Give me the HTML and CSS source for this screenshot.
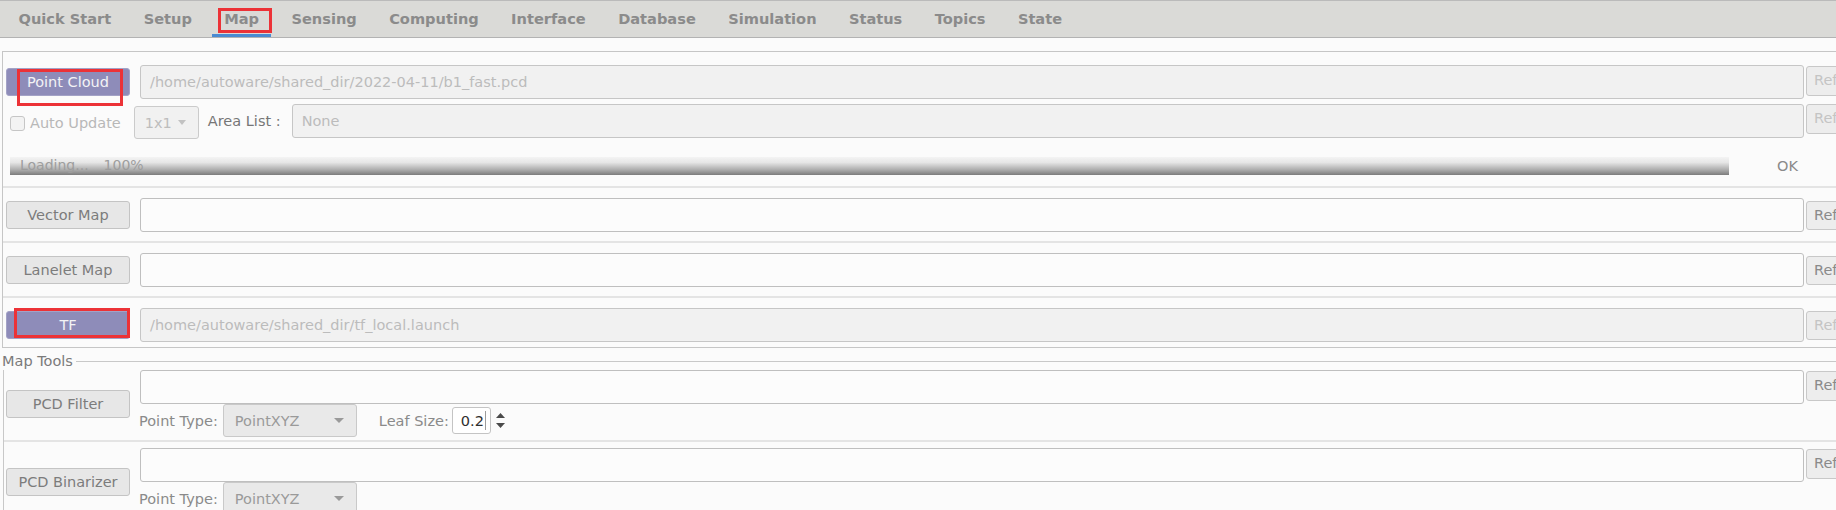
FILE: index.html
```html
<!DOCTYPE html>
<html>
<head>
<meta charset="utf-8">
<link rel="stylesheet" href="styles.css">
</head>
<body>
<div class="tabbar">
  <div class="tab">Quick Start</div>
  <div class="tab">Setup</div>
  <div class="tab active">Map</div>
  <div class="tab">Sensing</div>
  <div class="tab">Computing</div>
  <div class="tab">Interface</div>
  <div class="tab">Database</div>
  <div class="tab">Simulation</div>
  <div class="tab">Status</div>
  <div class="tab">Topics</div>
  <div class="tab">State</div>
</div>

<div class="frame">
  <section class="pc">
    <div class="row">
      <div class="main">
        <div class="btn on">Point Cloud</div>
        <div class="field dis grow">/home/autoware/shared_dir/2022-04-11/b1_fast.pcd</div>
      </div>
      <div class="ref dis">Ref</div>
    </div>
    <div class="row row2">
      <div class="main">
        <span class="check"></span>
        <span class="lbl dim autoup">Auto Update</span>
        <div class="combo small dis"><span>1x1</span><svg class="arr" width="8" height="5" viewBox="0 0 8 5"><path d="M0 0H8L4 5Z"/></svg></div>
        <span class="lbl area">Area List :</span>
        <div class="field dis grow area-field">None</div>
      </div>
      <div class="ref dis">Ref</div>
    </div>
    <div class="progress-row">
      <div class="progress"><span>Loading...</span><span class="pct">100%</span></div>
      <span class="ok">OK</span>
    </div>
  </section>

  <section class="simple">
    <div class="btn">Vector Map</div>
    <div class="field"></div>
    <div class="ref">Ref</div>
  </section>

  <section class="simple">
    <div class="btn">Lanelet Map</div>
    <div class="field"></div>
    <div class="ref">Ref</div>
  </section>

  <section class="simple last">
    <div class="btn on">TF</div>
    <div class="field dis">/home/autoware/shared_dir/tf_local.launch</div>
    <div class="ref dis">Ref</div>
  </section>
</div>

<div class="group">
  <div class="group-head"><span>Map Tools</span><i class="rule"></i></div>
  <div class="group-body">
    <section class="tool">
      <div class="btn">PCD Filter</div>
      <div class="tool-main">
        <div class="tool-row"><div class="field"></div><div class="ref top">Ref</div></div>
        <div class="opts">
          <span class="lbl">Point Type:</span>
          <div class="combo"><span>PointXYZ</span><svg class="arr" width="10" height="5" viewBox="0 0 10 5"><path d="M0 0H10L5 5Z"/></svg></div>
          <span class="lbl leaf">Leaf Size:</span>
          <div class="spin"><span>0.2</span><i class="caret"></i></div>
          <svg class="spin-arrows" width="9" height="16" viewBox="0 0 9 16"><path d="M4.5 0L9 5H0Z"/><path d="M0 10H9L4.5 15Z"/></svg>
        </div>
      </div>
    </section>
    <section class="tool second">
      <div class="btn">PCD Binarizer</div>
      <div class="tool-main">
        <div class="tool-row"><div class="field"></div><div class="ref top">Ref</div></div>
        <div class="opts">
          <span class="lbl">Point Type:</span>
          <div class="combo"><span>PointXYZ</span><svg class="arr" width="10" height="5" viewBox="0 0 10 5"><path d="M0 0H10L5 5Z"/></svg></div>
        </div>
      </div>
    </section>
  </div>
</div>

<div class="mark mark-map"></div>
<div class="mark mark-pc"></div>
<div class="mark mark-tf"></div>
</body>
</html>
```

FILE: styles.css
```css
* { box-sizing: border-box; }
html, body { margin: 0; padding: 0; }
body {
  width: 1836px;
  height: 510px;
  overflow: hidden;
  position: relative;
  background: #fbfbfb;
  font-family: "DejaVu Sans", "Noto Sans", sans-serif;
  font-size: 14.5px;
  color: #7a7a7a;
}

/* tab bar */
.tabbar {
  display: flex;
  height: 38px;
  padding-left: 2px;
  background: #dadad7;
  border-top: 1px solid #bababa;
  border-bottom: 1px solid #b3b3b3;
}
.tab {
  position: relative;
  margin: 0 4px;
  padding: 0 12.2px;
  line-height: 36px;
  font-size: 14.6px;
  font-weight: bold;
  color: #8b8b8b;
  white-space: nowrap;
}
.tab:first-child { padding-left: 12.5px; }
.tab.active::after {
  content: "";
  position: absolute;
  left: 0;
  right: 0;
  bottom: 0;
  height: 3px;
  background: #4a8bd2;
}

/* frame */
.frame {
  margin: 13px 0 0 2px;
  width: 1900px;
  border: 1px solid #c6c6c6;
  border-right: none;
}

.btn {
  display: flex;
  align-items: center;
  justify-content: center;
  width: 124px;
  height: 28px;
  flex: none;
  background: #e7e7e7;
  border: 1px solid #c4c4c4;
  border-radius: 3px;
  color: #7c7c7c;
  white-space: nowrap;
}
.btn.on {
  background: #8e8cb9;
  border-color: #a3a2c6;
  color: #f3f3f5;
}

.field {
  flex: none;
  width: 1664px;
  height: 34px;
  padding-left: 9px;
  line-height: 32px;
  background: #fcfcfc;
  border: 1px solid #bfbfbf;
  border-radius: 3px;
  color: #bcbcbc;
  white-space: nowrap;
  overflow: hidden;
}
.field.dis {
  background: #f1f1f1;
  border-color: #c6c6c6;
}
.field.grow {
  flex: 1;
  width: auto;
}

.ref {
  flex: none;
  width: 60px;
  height: 29px;
  margin-left: 2px;
  padding-left: 7px;
  line-height: 27px;
  background: #ededed;
  border: 1px solid #c8c8c8;
  border-radius: 3px;
  color: #8a8a8a;
}
.ref.dis { color: #c4c4c4; }

.lbl { white-space: nowrap; }

/* point cloud section */
.pc {
  padding: 13px 0 11px;
  border-bottom: 2px solid #e4e4e4;
}
.row {
  display: flex;
  align-items: flex-start;
}
.row .ref {
  margin-top: 1px;
  height: 30px;
}
.main {
  display: flex;
  align-items: center;
  width: 1801px;
  flex: none;
}
.main > .btn { margin-left: 3px; }
.main > .btn + .field { margin-left: 10px; }

.row2 { margin-top: 4px; }
.check {
  flex: none;
  width: 15px;
  height: 15px;
  margin: 4px 0 0 7px;
  background: #f3f3f3;
  border: 1px solid #c6c6c6;
  border-radius: 3px;
}
.autoup {
  margin: 4px 0 0 5px;
}
.dim { color: #b8b8b8; }

.combo {
  flex: none;
  display: flex;
  align-items: center;
  justify-content: space-between;
  width: 134px;
  height: 33px;
  padding: 0 12px 0 11px;
  background: #e9e9e9;
  border: 1px solid #c9c9c9;
  border-radius: 3px;
  color: #9a9a9a;
}
.combo .arr { fill: #9a9a9a; }
.combo.small {
  width: 65px;
  margin: 3px 0 0 13px;
  padding: 0 12px 0 10px;
  background: #f1f1f1;
  border-color: #cbcbcb;
  color: #bdbdbd;
}
.combo.small .arr { fill: #c2c2c2; }

.area {
  margin-left: 9px;
  color: #767676;
}
.area-field { margin-left: 11px; }

.progress-row {
  display: flex;
  align-items: center;
  margin-top: 18px;
}
.progress {
  flex: none;
  width: 1719px;
  height: 18px;
  margin-left: 7px;
  padding-left: 10px;
  overflow: hidden;
  line-height: 17px;
  font-size: 14px;
  color: #9d9d9d;
  white-space: nowrap;
  background: linear-gradient(#f4f4f4, #e6e6e6 30%, #ababab 72%, #7c7c7c);
}
.pct { margin-left: 15px; }
.ok {
  margin-left: 48px;
  color: #8a8a8a;
}

/* simple sections */
.simple {
  display: flex;
  align-items: center;
  padding: 10px 0 9px;
  border-bottom: 2px solid #e4e4e4;
}
.simple > .btn { margin-left: 3px; }
.simple > .field { margin-left: 10px; }
.simple.last {
  border-bottom: none;
  padding-bottom: 5px;
}

/* map tools group */
.group-head {
  display: flex;
  align-items: center;
  height: 17px;
  margin: 5px 0 0 2px;
}
.group-head span {
  line-height: 17px;
  color: #7a7a7a;
}
.rule {
  flex: 1;
  height: 1px;
  margin-left: 3px;
  background: #c8c8c8;
}
.group-body {
  margin-left: 3px;
  border-left: 1px solid #c8c8c8;
}
.tool {
  display: flex;
  align-items: center;
  padding-bottom: 3px;
  border-bottom: 2px solid #e4e4e4;
}
.tool.second { padding-top: 6px; }
.tool > .btn { margin-left: 2px; }
.tool-main { margin-left: 10px; }
.tool-row {
  display: flex;
  align-items: flex-start;
}
.ref.top {
  margin-top: 1px;
  height: 30px;
}
.opts {
  display: flex;
  align-items: center;
  height: 33px;
  margin-left: -1px;
}
.opts .lbl { color: #8a8a8a; }
.opts .combo { margin-left: 5px; }
.opts .leaf { margin-left: 22px; }
.spin {
  flex: none;
  display: flex;
  align-items: center;
  width: 39px;
  height: 27px;
  margin-left: 3px;
  padding-left: 8px;
  background: #ffffff;
  border: 1px solid #c4c4c4;
  border-radius: 3px;
  color: #2f2f2f;
}
.caret {
  width: 1px;
  height: 19px;
  margin-left: 1px;
  background: #9c9c9c;
}
.spin-arrows {
  margin-left: 5px;
  fill: #4a4a4a;
}

/* red annotation boxes */
.mark {
  position: absolute;
  border: 3px solid #ec3237;
}
.mark-map { left: 218px; top: 8px; width: 54px; height: 25px; }
.mark-pc { left: 17px; top: 69px; width: 106px; height: 37px; }
.mark-tf { left: 14px; top: 308px; width: 116px; height: 30px; }
```
